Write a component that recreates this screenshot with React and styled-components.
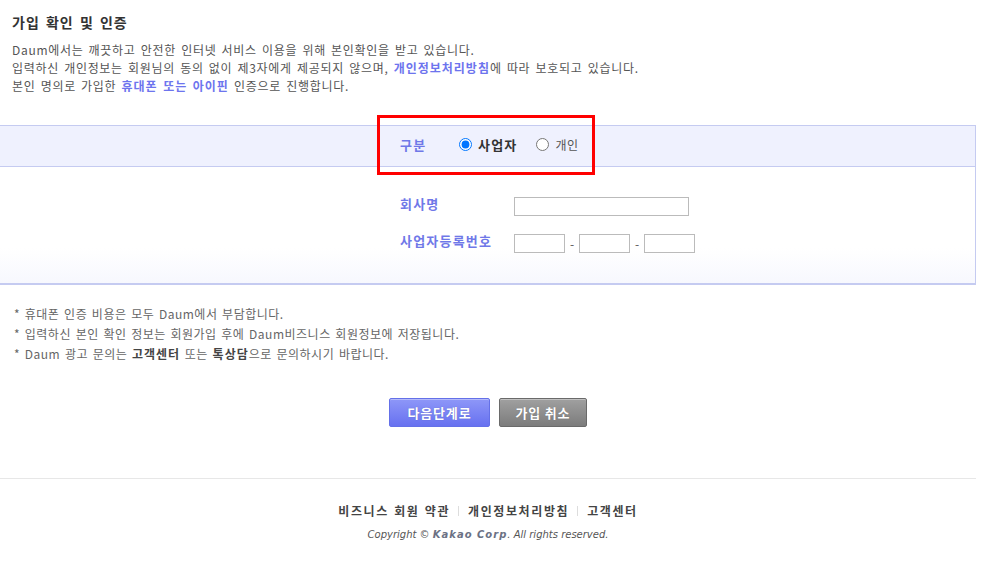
import styled, { createGlobalStyle } from 'styled-components';

const GlobalStyle = createGlobalStyle`
  html, body {
    margin: 0;
    padding: 0;
    background: #fff;
  }
  body {
    font-family: "Noto Sans CJK KR", "Noto Sans", sans-serif;
    color: #555;
  }
`;

const Page = styled.div`
  width: 976px;
`;

const Intro = styled.div`
  padding: 13px 12px 0;
`;

const Title = styled.h2`
  margin: 0 0 10px;
  font-size: 14px;
  line-height: 18px;
  font-weight: bold;
  color: #333;
  letter-spacing: 1px;
  word-spacing: 2px;
`;

const Text = styled.p`
  margin: 0;
  font-size: 12px;
  line-height: 18px;
  color: #555;
  letter-spacing: 0.7px;
  word-spacing: 1.8px;
`;

const Accent = styled.strong`
  color: ${p => p.$dark ? '#444' : '#6d74ee'};
  font-weight: bold;
  letter-spacing: 1px;
`;

const Box = styled.div`
  margin-top: 30px;
  border-right: 1px solid #c5cbf1;
  border-bottom: 2px solid #c5cbf1;
`;

const Header = styled.div`
  box-sizing: border-box;
  height: 42px;
  padding: 0 0 3px 400px;
  border-top: 1px solid #c5cbf1;
  border-bottom: 1px solid #c5cbf1;
  background: #eff1fe;
  display: flex;
  align-items: center;
`;

const Group = styled.div`
  position: relative;
  display: flex;
  align-items: center;
  height: 20px;
`;

const Highlight = styled.div`
  position: absolute;
  left: -23px;
  top: -20px;
  width: 218px;
  height: 60px;
  box-sizing: border-box;
  border: 3px solid #f00;
  pointer-events: none;
`;

const Label = styled.span`
  font-size: 13px;
  font-weight: bold;
  color: #6f78e8;
  letter-spacing: 1.2px;
  width: ${p => p.$w || 'auto'};
`;

const FieldLabel = styled(Label)`
  line-height: 14px;
`;

const Radio = styled.input.attrs({ type: 'radio', name: 'kind' })`
  margin: 0 6px 0 0;
  width: 13px;
  height: 13px;
`;

const Option = styled.label`
  display: flex;
  align-items: center;
  margin-left: ${p => p.$ml};
  font-size: ${p => p.$on ? '13px' : '12px'};
  font-weight: ${p => p.$on ? 'bold' : 'normal'};
  color: ${p => p.$on ? '#333' : '#555'};
  letter-spacing: ${p => p.$on ? '1.2px' : '0.5px'};
`;

const Body = styled.div`
  padding: 30px 0 30px 400px;
  background: linear-gradient(#fff 70%, #f7f8fe);
  display: grid;
  grid-template-columns: 114px auto;
  row-gap: 18px;
  align-items: start;
`;

const Field = styled.div`
  display: flex;
  align-items: center;
`;

const Input = styled.input.attrs({ type: 'text' })`
  box-sizing: border-box;
  width: ${p => p.$w}px;
  height: 19px;
  margin: 0;
  border: 1px solid #bbb;
  background: #fff;
  padding: 0 3px;
`;

const Dash = styled.span`
  width: 14px;
  text-align: center;
  font-size: 12px;
  line-height: 19px;
  color: #555;
`;

const Notes = styled.ul`
  list-style: none;
  margin: 19px 0 0;
  padding: 0 0 0 14px;
`;

const Note = styled.li`
  font-size: 12px;
  line-height: 20px;
  color: #666;
  letter-spacing: 0.5px;
  word-spacing: 1.5px;
`;

const Buttons = styled.div`
  margin-top: 34px;
  display: flex;
  justify-content: center;
  gap: 9px;
`;

const Button = styled.button`
  box-sizing: border-box;
  width: ${p => p.$w}px;
  height: 29px;
  padding: 0;
  font-family: "Noto Sans CJK KR", sans-serif;
  font-size: 13px;
  font-weight: bold;
  color: #fff;
  letter-spacing: 0.8px;
  text-shadow: 0 0 1px rgba(0, 0, 0, 0.25);
  border: 1px solid ${p => p.$gray ? '#6a6a6a' : '#6470e8'};
  border-radius: 2px;
  background: ${p => p.$gray
    ? 'linear-gradient(#a0a0a0, #7c7c7c)'
    : 'linear-gradient(#8e97f8, #6771f0)'};
  box-shadow: inset 0 1px 0 rgba(255, 255, 255, 0.35);
`;

const Footer = styled.footer`
  margin-top: 51px;
  border-top: 1px solid #e7e7e7;
  padding-top: 24px;
  text-align: center;
`;

const Links = styled.div`
  display: flex;
  justify-content: center;
  align-items: center;
  font-size: 12px;
  line-height: 16px;
  font-weight: bold;
  color: #444;
  letter-spacing: 1.6px;
  word-spacing: 1px;
`;

const Sep = styled.span`
  width: 1px;
  height: 10px;
  background: #ddd;
  margin: 0 9px 0 8px;
`;

const Copy = styled.p`
  margin: 9px 0 0;
  font-family: "DejaVu Sans", sans-serif;
  font-size: 10px;
  line-height: 14px;
  font-style: italic;
  color: #555;
`;

const Corp = styled.b`
  color: #6b7184;
  letter-spacing: 1px;
`;

export default function App() {
  return (
    <Page>
      <GlobalStyle />
      <Intro>
        <Title>가입 확인 및 인증</Title>
        <Text>Daum에서는 깨끗하고 안전한 인터넷 서비스 이용을 위해 본인확인을 받고 있습니다.</Text>
        <Text>입력하신 개인정보는 회원님의 동의 없이 제3자에게 제공되지 않으며, <Accent>개인정보처리방침</Accent>에 따라 보호되고 있습니다.</Text>
        <Text>본인 명의로 가입한 <Accent>휴대폰 또는 아이핀</Accent> 인증으로 진행합니다.</Text>
      </Intro>

      <Box>
        <Header>
          <Group>
            <Highlight />
            <Label $w="59px">구분</Label>
            <Option $on>
              <Radio defaultChecked />사업자
            </Option>
            <Option $ml="19px">
              <Radio />개인
            </Option>
          </Group>
        </Header>
        <Body>
          <FieldLabel>회사명</FieldLabel>
          <Field>
            <Input $w={175} />
          </Field>
          <FieldLabel>사업자등록번호</FieldLabel>
          <Field>
            <Input $w={51} />
            <Dash>-</Dash>
            <Input $w={51} />
            <Dash>-</Dash>
            <Input $w={51} />
          </Field>
        </Body>
      </Box>

      <Notes>
        <Note>* 휴대폰 인증 비용은 모두 Daum에서 부담합니다.</Note>
        <Note>* 입력하신 본인 확인 정보는 회원가입 후에 Daum비즈니스 회원정보에 저장됩니다.</Note>
        <Note>* Daum 광고 문의는 <Accent $dark>고객센터</Accent> 또는 <Accent $dark>톡상담</Accent>으로 문의하시기 바랍니다.</Note>
      </Notes>

      <Buttons>
        <Button $w={101}>다음단계로</Button>
        <Button $w={88} $gray>가입 취소</Button>
      </Buttons>

      <Footer>
        <Links>
          <span>비즈니스 회원 약관</span>
          <Sep />
          <span>개인정보처리방침</span>
          <Sep />
          <span>고객센터</span>
        </Links>
        <Copy>Copyright © <Corp>Kakao Corp</Corp>. All rights reserved.</Copy>
      </Footer>
    </Page>
  );
}
